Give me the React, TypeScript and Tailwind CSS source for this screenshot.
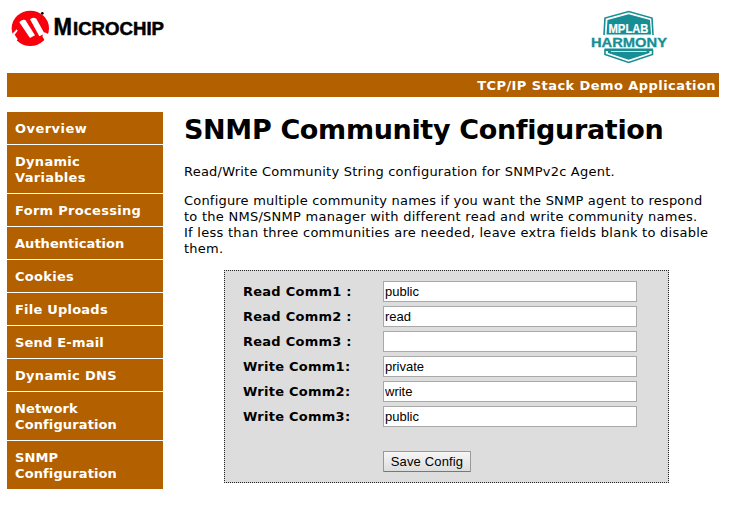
import React from "react";

const menu: { lines: string[]; cls: string }[] = [
  { lines: ["Overview"], cls: "tracking-[0.45px]" },
  { lines: ["Dynamic", "Variables"], cls: "tracking-[0.3px]" },
  { lines: ["Form Processing"], cls: "tracking-[0.3px]" },
  { lines: ["Authentication"], cls: "tracking-[0.03px]" },
  { lines: ["Cookies"], cls: "tracking-[0.3px]" },
  { lines: ["File Uploads"], cls: "tracking-[0.22px]" },
  { lines: ["Send E-mail"], cls: "tracking-[0.2px]" },
  { lines: ["Dynamic DNS"], cls: "tracking-[0.3px]" },
  { lines: ["Network", "Configuration"], cls: "tracking-[0.12px]" },
  { lines: ["SNMP", "Configuration"], cls: "tracking-[0.12px]" },
];

const fields = [
  { label: "Read Comm1 :", value: "public" },
  { label: "Read Comm2 :", value: "read" },
  { label: "Read Comm3 :", value: "" },
  { label: "Write Comm1:", value: "private" },
  { label: "Write Comm2:", value: "write" },
  { label: "Write Comm3:", value: "public" },
];

function MicrochipLogo() {
  return (
    <svg width="160" height="42" viewBox="8 8 160 42" aria-label="Microchip">
      <g transform="translate(10 9) scale(.33333)">
        <ellipse cx="61" cy="58" rx="56" ry="53" fill="#f8000c" />
        <path fill="#fff" d="M28 40Q34 30 46 33L75 79L60 87ZM60 31Q68 23 79 29L104 74L88 82ZM0 82L20 61L23 65L14 77L23 91L16 100L0 100ZM103 70L122 78V96H105L97 82Z" />
        <circle cx="97" cy="13" r="4" />
      </g>
      <g fontFamily="'Liberation Sans', Arial, sans-serif" fontWeight="700" stroke="#000" strokeWidth=".5">
        <text x="53.500" y="34.600" fontSize="24" textLength="18.500" lengthAdjust="spacingAndGlyphs">M</text>
        <text x="73" y="34.600" fontSize="17.500" textLength="91" lengthAdjust="spacingAndGlyphs">ICROCHIP</text>
      </g>
    </svg>
  );
}

function HarmonyLogo() {
  return (
    <svg width="84" height="62" viewBox="586 6 84 62" aria-label="MPLAB Harmony">
      <g fill="none" stroke="#168e94" strokeWidth="1.600">
        <path d="M604 35L605 18L628.700 11.500L652 18L653 35" />
        <path d="M605 49.500V54.500L628.700 62.500L652.500 54.500V49.500" />
      </g>
      <path fill="#168e94" d="M606.500 34.500L607.500 20L628.700 14.300L650 20L651 34.500ZM604.500 48.500H653V51H649.500V53L628.700 59.800L608 53V51H604.500Z" />
      <path stroke="#fff" strokeWidth=".8" fill="none" d="M611 51.500H646.500" />
      <g fontFamily="'Liberation Sans', Arial, sans-serif" fontWeight="700">
        <text x="608.500" y="33" fontSize="13" fill="#fff" stroke="#fff" strokeWidth=".2" textLength="40" lengthAdjust="spacingAndGlyphs">MPLAB</text>
        <text x="591" y="46.500" fontSize="12.500" fill="#168e94" stroke="#168e94" strokeWidth=".3" textLength="76" lengthAdjust="spacingAndGlyphs">HARMONY</text>
      </g>
    </svg>
  );
}

export default function App() {
  return (
    <div className="h-[509px] w-[739px] overflow-hidden bg-white pl-[7px] font-['DejaVu_Sans',Verdana,sans-serif] text-[13px] leading-4 text-black">
      <div className="w-[712px]">
        <header className="flex h-[73px] items-start justify-between">
          <div className="pt-2 pl-px"><MicrochipLogo /></div>
          <div className="pt-1.5 pr-[49px]"><HarmonyLogo /></div>
        </header>
        <div className="flex h-6 items-center justify-end bg-[#b36000] pt-px pr-[3px] font-bold tracking-[0.43px] text-white">
          TCP/IP Stack Demo Application
        </div>
        <div className="flex pt-[15px]">
          <nav className="flex w-[156px] shrink-0 flex-col gap-px">
            {menu.map((m) => (
              <a key={m.lines.join(" ")} className="bg-[#b36000] px-2 pt-[9px] pb-[7px] font-bold text-white">
                {m.lines.map((l) => (
                  <span key={l} className={`block whitespace-nowrap ${m.cls}`}>{l}</span>
                ))}
              </a>
            ))}
          </nav>
          <main className="ml-[21px] whitespace-nowrap">
            <h1 className="h-[34px] pt-px text-[27px] leading-[34px] font-bold tracking-[-0.34px]">SNMP Community Configuration</h1>
            <p className="mt-[18px] tracking-[0.23px]">Read/Write Community String configuration for SNMPv2c Agent.</p>
            <p className="mt-[13px] tracking-[0.26px]">
              <span className="block tracking-[0.2px]">Configure multiple community names if you want the SNMP agent to respond</span>
              <span className="block">to the NMS/SNMP manager with different read and write community names.</span>
              <span className="block">If less than three communities are needed, leave extra fields blank to disable</span>
              <span className="block">them.</span>
            </p>
            <form className="mt-[13px] ml-10 h-[213px] w-[445px] border border-dotted border-[#222] bg-[#ddd] pt-2.5 pl-[18px]">
              {fields.map((f) => (
                <div key={f.label} className="mb-1 flex h-[21px] items-center">
                  <label className="w-[140px] font-bold tracking-[0.25px]">{f.label}</label>
                  <input readOnly value={f.value} className="h-[21px] w-[254px] border border-[#a9a9a9] bg-white px-px font-['Liberation_Sans',Arial,sans-serif] text-[13px]" />
                </div>
              ))}
              <button type="button" className="mt-6 ml-[140px] block h-[21px] w-[88px] rounded-[1px] border border-[#999] border-b-[#777] bg-linear-to-b from-[#f6f6f6] to-[#ddd] font-['Liberation_Sans',Arial,sans-serif] text-[13px] leading-[19px] tracking-[0.15px]">
                Save Config
              </button>
            </form>
          </main>
        </div>
      </div>
    </div>
  );
}
